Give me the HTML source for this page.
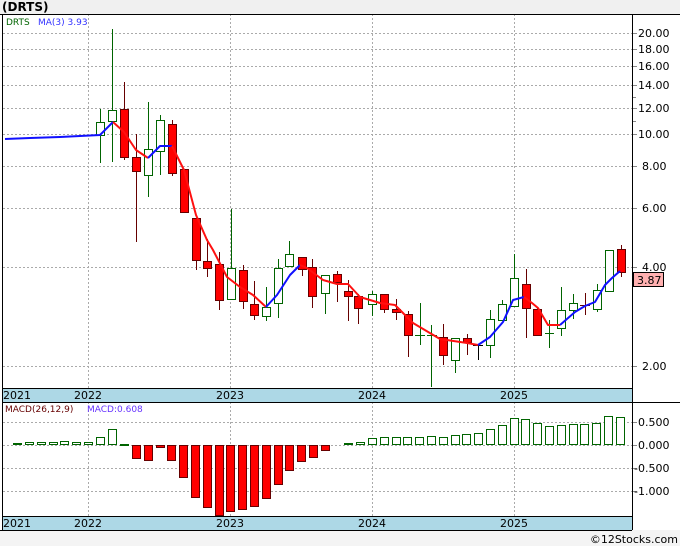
<!DOCTYPE html>
<html><head><meta charset="utf-8"><style>
body{margin:0;width:680px;height:546px;overflow:hidden;background:#fff;font-family:"DejaVu Sans","Liberation Sans",sans-serif}
svg{display:block}
</style></head><body>
<svg width="680" height="546" xmlns="http://www.w3.org/2000/svg" font-family="DejaVu Sans, Liberation Sans, sans-serif">
<rect x="0" y="0" width="680" height="14" fill="#f0f0f0"/>
<text x="2" y="11" font-size="12" font-weight="bold" fill="#000">(DRTS)</text>
<rect x="0" y="530" width="680" height="16" fill="#f4f4f4"/>
<text x="678" y="543" font-size="11" text-anchor="end" fill="#000">©12Stocks.com</text>
<!-- grid main -->
<g stroke="#aaa" stroke-dasharray="2,2" stroke-width="1">
<line x1="3" x2="632" y1="33.5" y2="33.5"/><line x1="3" x2="632" y1="49.5" y2="49.5"/><line x1="3" x2="632" y1="66.5" y2="66.5"/><line x1="3" x2="632" y1="85.5" y2="85.5"/><line x1="3" x2="632" y1="108.5" y2="108.5"/><line x1="3" x2="632" y1="134.5" y2="134.5"/><line x1="3" x2="632" y1="166.5" y2="166.5"/><line x1="3" x2="632" y1="208.5" y2="208.5"/><line x1="3" x2="632" y1="267.5" y2="267.5"/><line x1="3" x2="632" y1="366.5" y2="366.5"/>
<line x1="88.5" x2="88.5" y1="14" y2="388"/><line x1="230.5" x2="230.5" y1="14" y2="388"/><line x1="372.5" x2="372.5" y1="14" y2="388"/><line x1="514.5" x2="514.5" y1="14" y2="388"/>
<line x1="3" x2="632" y1="422.5" y2="422.5"/><line x1="3" x2="632" y1="445.5" y2="445.5"/><line x1="3" x2="632" y1="468.5" y2="468.5"/><line x1="3" x2="632" y1="491.5" y2="491.5"/>
<line x1="88.5" x2="88.5" y1="402" y2="530"/><line x1="230.5" x2="230.5" y1="402" y2="530"/><line x1="372.5" x2="372.5" y1="402" y2="530"/><line x1="514.5" x2="514.5" y1="402" y2="530"/>
</g>
<!-- date strips -->
<rect x="2" y="388" width="630" height="14" fill="#add8e6"/>
<rect x="2" y="516" width="630" height="14" fill="#add8e6"/>
<g font-size="11" fill="#000">
<text x="3" y="399">2021</text><text x="88" y="399" text-anchor="middle">2022</text><text x="230" y="399" text-anchor="middle">2023</text><text x="372" y="399" text-anchor="middle">2024</text><text x="514" y="399" text-anchor="middle">2025</text>
<text x="3" y="527">2021</text><text x="88" y="527" text-anchor="middle">2022</text><text x="230" y="527" text-anchor="middle">2023</text><text x="372" y="527" text-anchor="middle">2024</text><text x="514" y="527" text-anchor="middle">2025</text>
</g>
<!-- frame -->
<g stroke="#000" stroke-width="1" fill="none">
<line x1="0" x2="680" y1="14.5" y2="14.5"/>
<line x1="2.5" x2="2.5" y1="14" y2="530"/>
<line x1="632.5" x2="632.5" y1="14" y2="530"/>
<line x1="2" x2="632" y1="388.5" y2="388.5"/>
<line x1="2" x2="680" y1="402.5" y2="402.5"/>
<line x1="2" x2="632" y1="516.5" y2="516.5"/>
<line x1="0" x2="632" y1="530.5" y2="530.5"/>
</g>
<g stroke="#888"><line x1="633" x2="637" y1="33.5" y2="33.5"/><line x1="633" x2="637" y1="49.5" y2="49.5"/><line x1="633" x2="637" y1="66.5" y2="66.5"/><line x1="633" x2="637" y1="85.5" y2="85.5"/><line x1="633" x2="636" y1="97.5" y2="97.5"/><line x1="633" x2="637" y1="108.5" y2="108.5"/><line x1="633" x2="636" y1="121.5" y2="121.5"/><line x1="633" x2="637" y1="134.5" y2="134.5"/><line x1="633" x2="637" y1="166.5" y2="166.5"/><line x1="633" x2="637" y1="208.5" y2="208.5"/><line x1="633" x2="637" y1="267.5" y2="267.5"/><line x1="633" x2="637" y1="366.5" y2="366.5"/>
<line x1="633" x2="637" y1="422.5" y2="422.5"/><line x1="633" x2="637" y1="445.5" y2="445.5"/><line x1="633" x2="637" y1="468.5" y2="468.5"/><line x1="633" x2="637" y1="491.5" y2="491.5"/></g>
<g font-size="11" fill="#000">
<text x="638" y="37">20.00</text><text x="638" y="53">18.00</text><text x="638" y="70">16.00</text><text x="638" y="89">14.00</text><text x="638" y="112">12.00</text><text x="638" y="138">10.00</text><text x="642" y="170">8.00</text><text x="642" y="212">6.00</text><text x="642" y="271">4.00</text><text x="642" y="370">2.00</text>
<text x="638" y="426">0.500</text><text x="638" y="449">0.000</text><text x="634" y="472">-0.500</text><text x="634" y="495">-1.000</text>
</g>
<rect x="633.5" y="272.5" width="30" height="14" fill="#ffb0b0" stroke="#000"/>
<text x="637" y="284" font-size="11" fill="#000">3.87</text>
<text x="6" y="25" font-size="9" fill="#006400">DRTS</text><text x="38" y="25" font-size="9" fill="#3333ff">MA(3)  3.93</text>
<text x="5" y="412" font-size="9" fill="#600">MACD(26,12,9)</text><text x="87" y="412" font-size="9" fill="#6633ff">MACD:0.608</text>
<!-- wicks -->
<g stroke-width="1">
<g stroke="#006400">
<line x1="100.5" x2="100.5" y1="109" y2="163"/><line x1="112.5" x2="112.5" y1="29" y2="162"/><line x1="148.5" x2="148.5" y1="102" y2="197"/><line x1="160.5" x2="160.5" y1="115" y2="175"/><line x1="231.5" x2="231.5" y1="209" y2="300"/><line x1="266.5" x2="266.5" y1="287" y2="321"/><line x1="278.5" x2="278.5" y1="259" y2="318"/><line x1="289.5" x2="289.5" y1="241" y2="266"/><line x1="325.5" x2="325.5" y1="275" y2="314"/><line x1="372.5" x2="372.5" y1="291" y2="316"/><line x1="420.5" x2="420.5" y1="303" y2="345"/><line x1="431.5" x2="431.5" y1="325" y2="387"/><line x1="455.5" x2="455.5" y1="338" y2="373"/><line x1="490.5" x2="490.5" y1="310" y2="358"/><line x1="502.5" x2="502.5" y1="300" y2="320"/><line x1="514.5" x2="514.5" y1="254" y2="306"/><line x1="549.5" x2="549.5" y1="320" y2="348"/><line x1="561.5" x2="561.5" y1="287" y2="336"/><line x1="573.5" x2="573.5" y1="294" y2="319"/><line x1="597.5" x2="597.5" y1="284" y2="312"/><line x1="609.5" x2="609.5" y1="250" y2="292"/>
<line x1="415" x2="425" y1="335.5" y2="335.5"/><line x1="427" x2="437" y1="335.5" y2="335.5"/><line x1="545" x2="554" y1="333.5" y2="333.5"/>
</g>
<g stroke="#600">
<line x1="124.5" x2="124.5" y1="82" y2="160"/><line x1="136.5" x2="136.5" y1="134" y2="242"/><line x1="172.5" x2="172.5" y1="120" y2="176"/><line x1="196.5" x2="196.5" y1="218" y2="270"/><line x1="207.5" x2="207.5" y1="239" y2="277"/><line x1="219.5" x2="219.5" y1="252" y2="310"/><line x1="243.5" x2="243.5" y1="265" y2="309"/><line x1="254.5" x2="254.5" y1="281" y2="320"/><line x1="302.5" x2="302.5" y1="257" y2="276"/><line x1="312.5" x2="312.5" y1="259" y2="308"/><line x1="337.5" x2="337.5" y1="271" y2="302"/><line x1="348.5" x2="348.5" y1="280" y2="321"/><line x1="358.5" x2="358.5" y1="294" y2="324"/><line x1="384.5" x2="384.5" y1="294" y2="313"/><line x1="396.5" x2="396.5" y1="299" y2="320"/><line x1="408.5" x2="408.5" y1="311" y2="357"/><line x1="443.5" x2="443.5" y1="324" y2="365"/><line x1="467.5" x2="467.5" y1="334" y2="355"/><line x1="526.5" x2="526.5" y1="269" y2="338"/><line x1="537.5" x2="537.5" y1="308" y2="336"/><line x1="585.5" x2="585.5" y1="293" y2="315"/><line x1="621.5" x2="621.5" y1="245" y2="277"/>
<line x1="580" x2="590" y1="305.5" y2="305.5"/>
</g>
<line x1="478.5" x2="478.5" y1="345" y2="360" stroke="#000"/><line x1="473" x2="483" y1="345.5" y2="345.5" stroke="#000"/>
</g>
<!-- bodies -->
<g fill="#fff" stroke="#006400">
<rect x="96.5" y="122.5" width="8" height="13"/><rect x="108.5" y="110.5" width="8" height="11"/><rect x="144.5" y="149.5" width="8" height="26"/><rect x="156.5" y="120.5" width="8" height="31"/><rect x="227.5" y="268.5" width="8" height="31"/><rect x="262.5" y="307.5" width="8" height="9"/><rect x="274.5" y="268.5" width="8" height="35"/><rect x="285.5" y="254.5" width="8" height="12"/><rect x="321.5" y="275.5" width="8" height="18"/><rect x="368.5" y="294.5" width="8" height="10"/><rect x="451.5" y="338.5" width="8" height="22"/><rect x="486.5" y="319.5" width="8" height="26"/><rect x="498.5" y="304.5" width="8" height="16"/><rect x="510.5" y="278.5" width="8" height="28"/><rect x="557.5" y="310.5" width="8" height="18"/><rect x="569.5" y="303.5" width="8" height="7"/><rect x="593.5" y="290.5" width="8" height="19"/><rect x="605.5" y="250.5" width="8" height="41"/>
</g>
<g fill="#f00" stroke="#600">
<rect x="120.5" y="109.5" width="8" height="48"/><rect x="132.5" y="157.5" width="8" height="14"/><rect x="168.5" y="124.5" width="8" height="49"/><rect x="180.5" y="169.5" width="8" height="43"/><rect x="192.5" y="218.5" width="8" height="42"/><rect x="203.5" y="261.5" width="8" height="7"/><rect x="215.5" y="264.5" width="8" height="36"/><rect x="239.5" y="270.5" width="8" height="31"/><rect x="250.5" y="304.5" width="8" height="11"/><rect x="298.5" y="257.5" width="8" height="12"/><rect x="308.5" y="267.5" width="8" height="29"/><rect x="333.5" y="274.5" width="8" height="8"/><rect x="344.5" y="291.5" width="8" height="5"/><rect x="354.5" y="296.5" width="8" height="12"/><rect x="380.5" y="294.5" width="8" height="15"/><rect x="392.5" y="309.5" width="8" height="3"/><rect x="404.5" y="314.5" width="8" height="21"/><rect x="439.5" y="337.5" width="8" height="18"/><rect x="463.5" y="338.5" width="8" height="4"/><rect x="522.5" y="284.5" width="8" height="24"/><rect x="533.5" y="309.5" width="8" height="26"/><rect x="617.5" y="249.5" width="8" height="23"/>
</g>
<!-- MA line -->
<g fill="none" stroke-width="2" stroke-linejoin="round">
<polyline stroke="#1010ff" points="5,139 30,138 60,137 100,135 113,122"/>
<polyline stroke="#ff1010" points="113,122 124,132 136,150 148,158"/>
<polyline stroke="#1010ff" points="148,158 160,146 172,146"/>
<polyline stroke="#ff1010" points="172,146 184,170 196,215 207,240 213,250 227,277 240,287 253,295 266,307"/>
<polyline stroke="#1010ff" points="266,307 277,295 290,275 300,265"/>
<polyline stroke="#ff1010" points="300,265 307,268 323,280 337,284 348,284 360,297 380,303 395,305 413,323 440,339 467,343 478,345"/>
<polyline stroke="#1010ff" points="478,345 490,337 503,322 513,300 524,297"/>
<polyline stroke="#ff1010" points="524,297 532,303 538,308 548,325 560,325"/>
<polyline stroke="#1010ff" points="560,325 575,312 585,306 595,302 605,285 612,278 620,271"/>
</g>
<!-- MACD bars -->
<g fill="#fff" stroke="#006400">
<rect x="13.5" y="443.5" width="8" height="1"/><rect x="25.5" y="442.5" width="8" height="2"/><rect x="37.5" y="442.5" width="8" height="2"/><rect x="49.5" y="442.5" width="8" height="2"/><rect x="60.5" y="441.5" width="8" height="3"/><rect x="72.5" y="442.5" width="8" height="2"/><rect x="84.5" y="442.5" width="8" height="2"/><rect x="96.5" y="437.5" width="8" height="7"/><rect x="108.5" y="429.5" width="8" height="15"/><rect x="120.5" y="444.5" width="8" height="1"/>
<rect x="344.5" y="443.5" width="8" height="1"/><rect x="356.5" y="442.5" width="8" height="2"/><rect x="368.5" y="438.5" width="8" height="6"/><rect x="380.5" y="437.5" width="8" height="7"/><rect x="392.5" y="437.5" width="8" height="7"/><rect x="403.5" y="437.5" width="8" height="7"/><rect x="415.5" y="437.5" width="8" height="7"/><rect x="427.5" y="436.5" width="8" height="8"/><rect x="439.5" y="437.5" width="8" height="7"/><rect x="451.5" y="435.5" width="8" height="9"/><rect x="462.5" y="434.5" width="8" height="10"/><rect x="474.5" y="433.5" width="8" height="11"/><rect x="486.5" y="429.5" width="8" height="15"/><rect x="498.5" y="425.5" width="8" height="19"/><rect x="510.5" y="418.5" width="8" height="26"/><rect x="521.5" y="419.5" width="8" height="25"/><rect x="533.5" y="423.5" width="8" height="21"/><rect x="545.5" y="426.5" width="8" height="18"/><rect x="557.5" y="425.5" width="8" height="19"/><rect x="569.5" y="424.5" width="8" height="20"/><rect x="580.5" y="424.5" width="8" height="20"/><rect x="592.5" y="423.5" width="8" height="21"/><rect x="604.5" y="416.5" width="8" height="28"/><rect x="616.5" y="417.5" width="8" height="27"/>
</g>
<g fill="#f00" stroke="#600">
<rect x="132.5" y="445.5" width="8" height="13"/><rect x="144.5" y="445.5" width="8" height="15"/><rect x="156.5" y="445.5" width="8" height="2"/><rect x="167.5" y="445.5" width="8" height="15"/><rect x="179.5" y="445.5" width="8" height="32"/><rect x="191.5" y="445.5" width="8" height="52"/><rect x="203.5" y="445.5" width="8" height="62"/><rect x="215.5" y="445.5" width="8" height="70"/><rect x="226.5" y="445.5" width="8" height="66"/><rect x="238.5" y="445.5" width="8" height="64"/><rect x="250.5" y="445.5" width="8" height="61"/><rect x="262.5" y="445.5" width="8" height="53"/><rect x="274.5" y="445.5" width="8" height="39"/><rect x="285.5" y="445.5" width="8" height="25"/><rect x="297.5" y="445.5" width="8" height="16"/><rect x="309.5" y="445.5" width="8" height="12"/><rect x="321.5" y="445.5" width="8" height="5"/>
</g>
</svg>
</body></html>
